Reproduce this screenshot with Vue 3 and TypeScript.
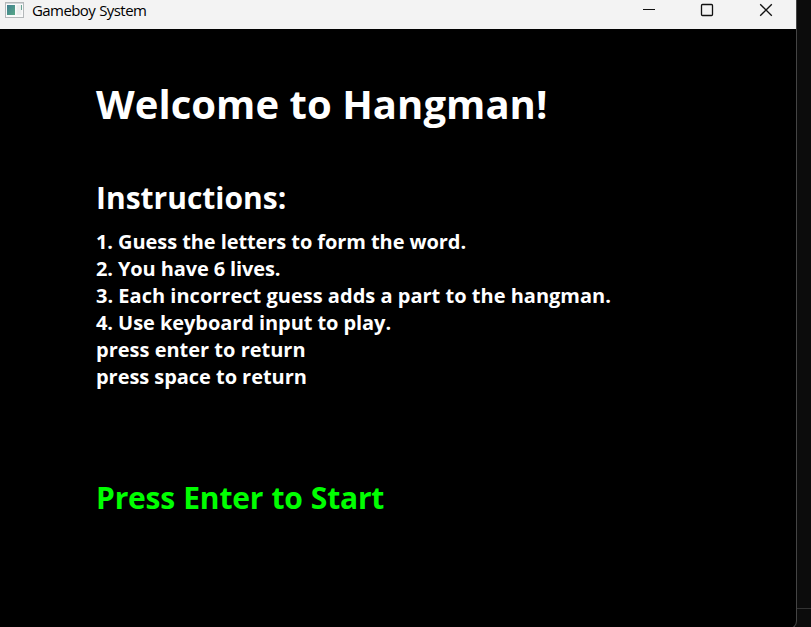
<script setup lang="ts">
const instructions: string[] = [
  '1. Guess the letters to form the word.',
  '2. You have 6 lives.',
  '3. Each incorrect guess adds a part to the hangman.',
  '4. Use keyboard input to play.',
  'press enter to return',
  'press space to return',
]
</script>

<template>
  <div class="desktop">
    <div class="window">
      <header class="titlebar">
        <svg class="app-icon" width="20" height="16" viewBox="0 0 20 16">
          <defs>
            <linearGradient id="pane" x1="0" y1="0" x2="1" y2="1">
              <stop offset="0" stop-color="#3f7f91" />
              <stop offset="1" stop-color="#58a886" />
            </linearGradient>
          </defs>
          <rect x="0.5" y="0.5" width="18" height="15" fill="#fafafa" stroke="#b4b8ba" />
          <path d="M1 1.5H18" stroke="#d2d7da" />
          <rect x="2" y="3" width="8" height="10" fill="url(#pane)" />
          <rect x="11.5" y="3" width="5" height="10" fill="#eceeee" />
          <path d="M16.5 3V8" stroke="#69a494" />
        </svg>
        <span class="title">Gameboy System</span>
        <div class="controls">
          <svg width="14" height="14" viewBox="0 0 14 14"><path d="M1 6.5H13" shape-rendering="crispEdges" /></svg>
          <svg width="14" height="14" viewBox="0 0 14 14"><rect x="1.5" y="1.5" width="11" height="11" rx="1" /></svg>
          <svg class="close" width="14" height="14" viewBox="0 0 14 14"><path d="M1.2 1.2L12.8 12.8M12.8 1.2L1.2 12.8" /></svg>
        </div>
      </header>
      <main class="game">
        <h1>Welcome to Hangman!</h1>
        <h2>Instructions:</h2>
        <ul>
          <li v-for="line in instructions" :key="line">{{ line }}</li>
        </ul>
        <p class="start">Press Enter to Start</p>
      </main>
    </div>
    <aside class="edge"></aside>
  </div>
</template>

<style>
body { margin: 0; background: #0c0c0c; }
</style>
<style scoped>
.desktop { display: flex; align-items: flex-start; width: 811px; height: 627px; overflow: hidden; background: #0c0c0c; font-family: "Open Sans", sans-serif; }
.window { flex: none; width: 796px; height: 628px; background: #000; border: solid #444; border-width: 0 1px 1px 0; border-bottom-right-radius: 8px; }
.titlebar { display: flex; align-items: center; height: 29px; box-sizing: border-box; padding: 0 23px 9px 5px; background: #f3f3f3; }
.title { margin: 0 0 0 7px; font: 15px/20px "Open Sans", sans-serif; letter-spacing: -0.58px; word-spacing: 0.7px; color: #000; }
.controls { display: flex; gap: 44px; margin-left: auto; }
.controls svg { fill: none; stroke: #111; stroke-width: 1.3; }
.controls .close { margin-left: 1px; }
.game { padding: 47px 0 0 96px; color: #fff; font-weight: 700; white-space: nowrap; }
h1 { margin: 0; font-size: 40px; line-height: 56px; letter-spacing: 0.05px; }
h2 { margin: 45px 0 0; font-size: 30px; line-height: 42px; }
ul { margin: 9px 0 0; padding: 0; list-style: none; font-size: 20px; line-height: 27px; }
li:nth-child(1) { letter-spacing: -0.08px; }
li:nth-child(2) { letter-spacing: -0.12px; }
li:nth-child(3) { letter-spacing: 0.01px; }
li:nth-child(4) { letter-spacing: -0.07px; }
li:nth-child(6) { letter-spacing: -0.05px; }
.start { margin: 87px 0 0; font-size: 30px; line-height: 42px; letter-spacing: -0.19px; word-spacing: 0.6px; color: #0f0; }
.edge { width: 14px; height: 608px; border-bottom: 1px solid #333; }
</style>
